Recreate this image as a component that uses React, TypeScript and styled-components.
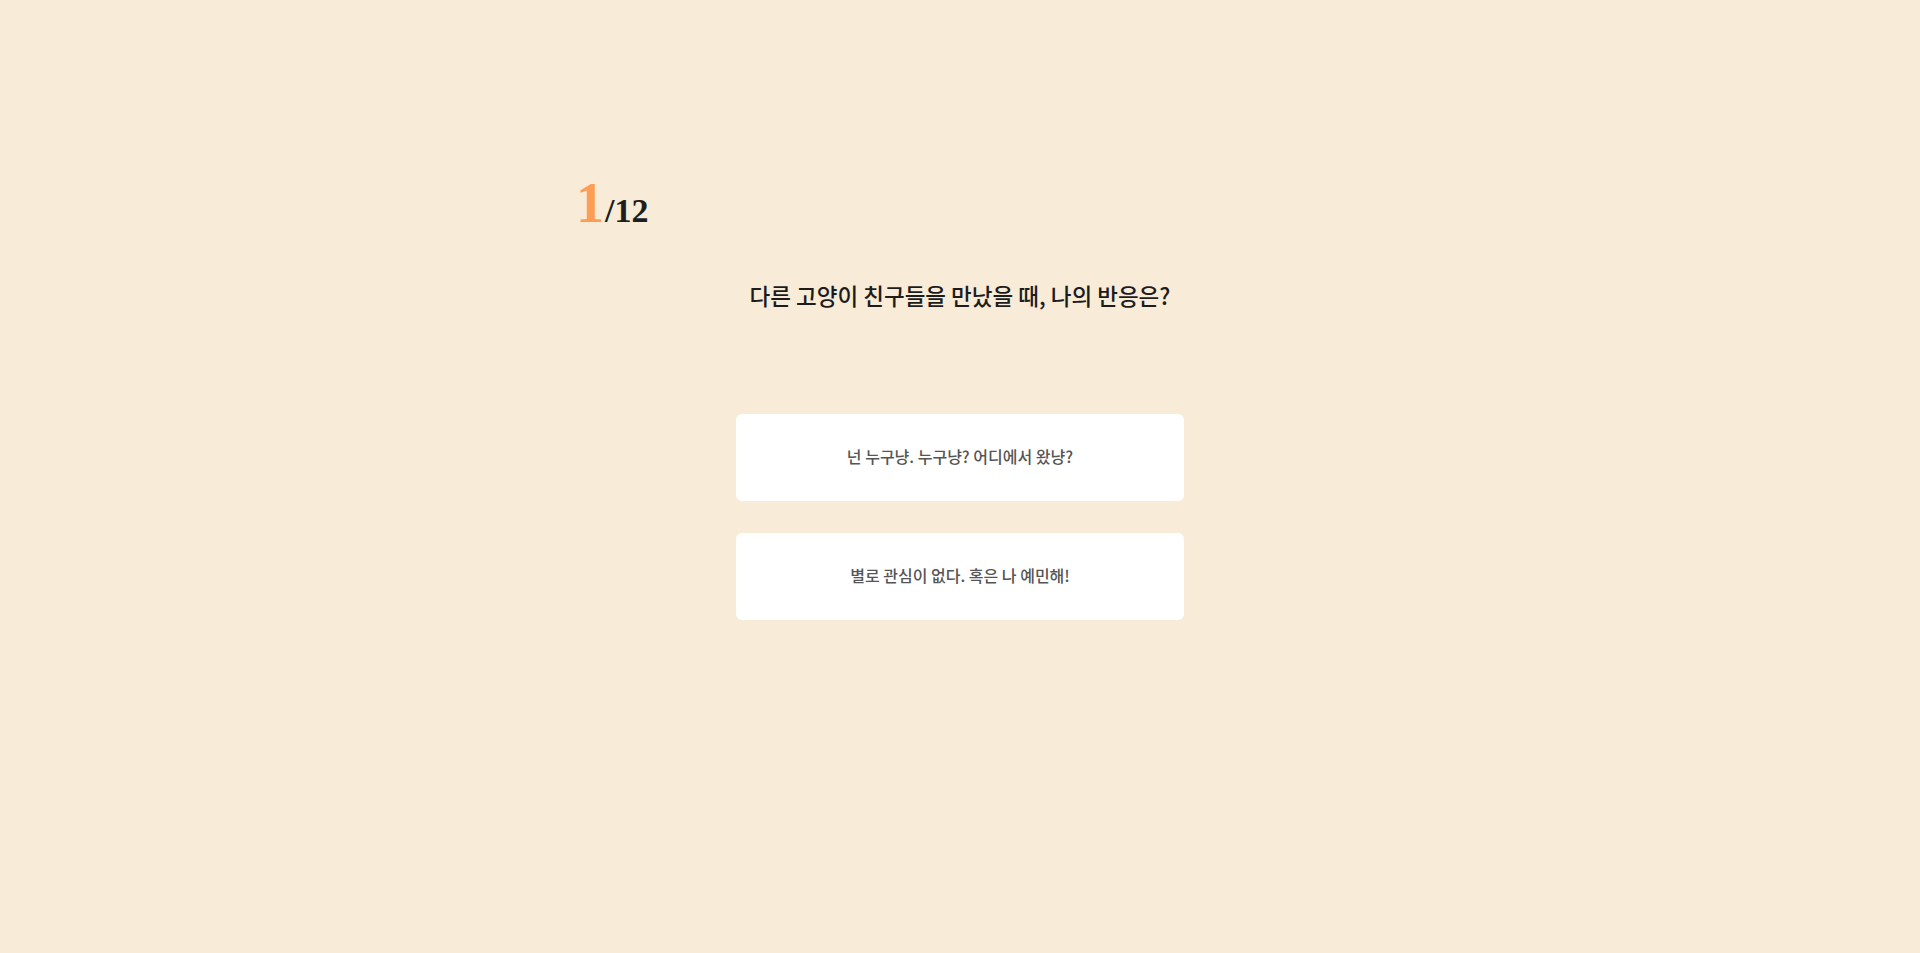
import React from "react";
import styled, { createGlobalStyle } from "styled-components";

const GlobalStyle = createGlobalStyle`
  html, body {
    margin: 0;
    padding: 0;
    background: #f8ebd8;
  }
  body {
    font-family: "Noto Sans CJK KR", "Noto Sans", sans-serif;
  }
`;

const Page = styled.main`
  min-height: 100vh;
  background: #f8ebd8;
`;

const Container = styled.section`
  width: 768px;
  margin: 0 auto;
  padding-top: 175px;
  display: flex;
  flex-direction: column;
`;

const Counter = styled.div`
  display: flex;
  align-items: baseline;
  font-family: "Liberation Serif", "DejaVu Serif", serif;
  font-weight: 700;
  color: #1e1e1e;
  height: 66px;
  line-height: 1;
`;

const Current = styled.span`
  font-size: 56px;
  color: #ff9d55;
`;

const Total = styled.span`
  font-size: 34px;
  margin-left: 1px;
`;

const Question = styled.h2`
  margin: 38px 0 0;
  text-align: center;
  font-size: 22.5px;
  font-weight: 500;
  color: #1c1c1c;
  line-height: 32px;
`;

const Options = styled.div`
  margin: 103px auto 0;
  width: 448px;
  display: flex;
  flex-direction: column;
  gap: 32px;
`;

const OptionButton = styled.button`
  height: 87px;
  padding: 0 0 4px;
  border: none;
  border-radius: 6px;
  background: #ffffff;
  font-family: "Noto Sans CJK KR", "Noto Sans", sans-serif;
  font-size: 16px;
  font-weight: 500;
  color: #555555;
  cursor: pointer;
`;

const answers = [
  "넌 누구냥. 누구냥? 어디에서 왔냥?",
  "별로 관심이 없다. 혹은 나 예민해!",
];

export default function App() {
  return (
    <Page>
      <GlobalStyle />
      <Container>
        <Counter>
          <Current>1</Current>
          <Total>/12</Total>
        </Counter>
        <Question>다른 고양이 친구들을 만났을 때, 나의 반응은?</Question>
        <Options>
          {answers.map((a) => (
            <OptionButton key={a}>{a}</OptionButton>
          ))}
        </Options>
      </Container>
    </Page>
  );
}
